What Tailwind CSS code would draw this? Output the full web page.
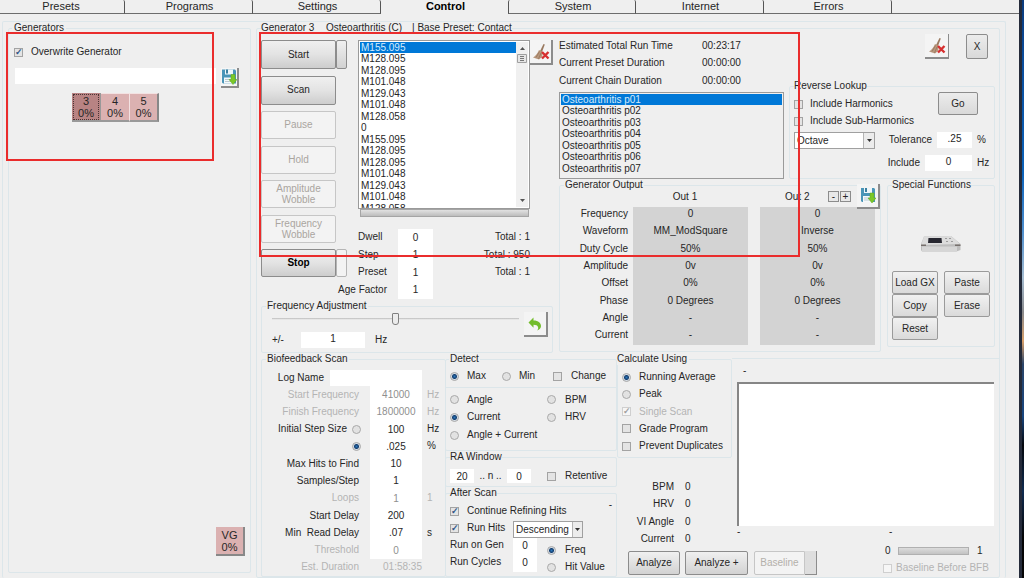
<!doctype html>
<html lang="en">

<head>
  <meta charset="UTF-8" />
  <meta name="viewport" content="width=device-width, initial-scale=1.0" />
  <title>Control</title>
  <script src="https://cdn.jsdelivr.net/npm/@tailwindcss/browser@4"></script>
</head>

<body class="h-screen overflow-hidden bg-[#efefef] font-['Liberation_Sans',Arial,sans-serif] text-[10px]/[12px] text-[#262626]">

  <!-- Shared icons -->
  <svg class="hidden">
    <symbol id="icon-save" viewBox="0 0 16 17">
      <path d="M1 1h13l1 1v13H2l-1-1z" fill="#4a95b8" />
      <path d="M4 1h8v5H4z" fill="#eef6fa" />
      <path d="M5 1h2v4H5z" fill="#3b7f9f" />
      <path d="M3 9h10v6H3z" fill="#f4f8fa" />
      <path d="M4 11h7M4 13h7" stroke="#b9c9d1" />
      <path d="M10 6h4v5h2l-4 5-4-5h2z" fill="#7bc728" stroke="#5fa81b" stroke-width=".5" />
    </symbol>
    <symbol id="icon-broom" viewBox="0 0 18 18">
      <path d="M11.500 1l1.300.6-3 8-2-1z" fill="#9a7a60" />
      <path d="M7 7l4 2.200L10 14l-3 2.500L1 14.500c2.500-1.500 4.500-4 6-7.500z" fill="#b8977c" />
      <path d="M7.500 8.500l-3.500 6M9 10l-2.500 6" stroke="#8f7059" stroke-width=".7" />
      <path d="M10 9l6.500 6.500M16.500 9L10 15.500" stroke="#d62f2f" stroke-width="2.400" />
    </symbol>
  </svg>

  <div class="flex h-full">
    <!-- Application window -->
    <div class="flex min-w-0 flex-1 flex-col [&_fieldset]:min-w-0 [&_fieldset]:border [&_fieldset]:rounded-[2px] [&_fieldset]:border-[#dce6ea] [&_[type=checkbox]]:relative [&_[type=checkbox]]:size-[9px] [&_[type=checkbox]]:shrink-0 [&_[type=checkbox]]:appearance-none [&_[type=checkbox]]:border [&_[type=checkbox]]:border-[#a3a3a3] [&_[type=checkbox]]:bg-[#e4e4e4] [&_[type=checkbox]]:after:absolute [&_[type=checkbox]]:after:left-0 [&_[type=checkbox]]:after:-top-px [&_[type=checkbox]]:after:text-[9px]/[9px] [&_[type=checkbox]]:after:font-bold [&_[type=checkbox]]:after:text-[#2f5688] [&_[type=checkbox]:checked]:after:content-['✓'] [&_[type=checkbox]:disabled]:border-[#cfcfcf] [&_[type=checkbox]:disabled]:bg-[#f6f6f6] [&_[type=checkbox]:disabled]:after:text-[#a0a0a0] [&_[type=radio]]:size-[9px] [&_[type=radio]]:shrink-0 [&_[type=radio]]:appearance-none [&_[type=radio]]:rounded-full [&_[type=radio]]:border [&_[type=radio]]:border-[#a9a9a9] [&_[type=radio]]:bg-[#e2e2e2] [&_[type=radio]:checked]:bg-[radial-gradient(circle,#2a78bd_0,#153f70_2px,#d5dde5_3px)]">

      <!-- Tabs -->
      <nav class="flex h-[14px] shrink-0 text-[11px]/[12px] [&_a]:border-b [&_a]:border-b-[#6d6d6d] [&_a]:text-center">
        <a href="#" class="w-[125px] rounded-tr-[2px] border-r border-r-[#555] pr-[2px]">Presets</a>
        <a href="#" class="w-[128px] rounded-tr-[2px] border-r border-r-[#555] pl-[2px]">Programs</a>
        <a href="#" class="w-[128px] rounded-tr-[2px] border-r border-r-[#555] pl-[2px]">Settings</a>
        <span class="w-[127px] pl-[2px] text-center font-bold text-black">Control</span>
        <a href="#" class="w-[128px] rounded-t-[2px] border-x border-x-[#555] pl-[2px]">System</a>
        <a href="#" class="w-[128px] rounded-tr-[2px] border-r border-r-[#555] pl-[2px]">Internet</a>
        <a href="#" class="w-[128px] rounded-tr-[2px] border-r border-r-[#555] pl-[2px]">Errors</a>
        <span class="flex-1 border-b border-[#6d6d6d]"></span>
      </nav>

      <main class="mt-[7px] mr-[13px] ml-[2px] flex min-h-0 flex-1 gap-[5px] rounded-[2px] border border-b-0 border-[#dce6ea] px-[5px]">

        <!-- Generators -->
        <fieldset class="mb-[5px] flex w-[243px] shrink-0 flex-col">
          <legend class="ml-[3px] px-[2px]">Generators</legend>
          <label class="mt-[12px] ml-[5px] flex items-center gap-[8px]"><input type="checkbox" checked>Overwrite Generator</label>
          <div class="mt-[10px] ml-[6px] flex items-start gap-[5px]">
            <input type="text" aria-label="Generator name" class="h-[16px] w-[201px] bg-white px-1">
            <button aria-label="Save generator" class="border-r-2 border-b-2 border-[#8c8c8c] bg-[#f6f6f6]"><svg class="h-[18px] w-[16px]"><use href="#icon-save" /></svg></button>
          </div>
          <div class="mt-[5px] ml-[63px] flex text-[11px]/[12px]">
            <button class="h-[29px] w-[29px] border-r border-b-2 border-[#999] bg-[#b88383] p-px"><span class="block border border-dotted border-[#4b3535]">3<br>0%</span></button>
            <button class="h-[29px] w-[29px] border-t border-r border-b-2 border-t-[#f3e2e2] border-r-[#f3e2e2] border-b-[#999] bg-[#dbb1b1]">4<br>0%</button>
            <button class="h-[29px] w-[29px] border-t border-r-2 border-b-2 border-t-[#f3e2e2] border-r-[#888] border-b-[#999] bg-[#dbb1b1]">5<br>0%</button>
          </div>
          <button class="mt-auto mr-[5px] mb-[16px] ml-auto h-[29px] w-[29px] border-r-2 border-b-2 border-[#888] bg-[#dbb1b1] text-[11px]/[12px]">VG<br>0%</button>
        </fieldset>

        <!-- Generator 3 -->
        <fieldset class="flex min-w-0 flex-1 flex-col pl-[4px]">
          <legend class="whitespace-pre"><span class="inline-block w-[65px]">Generator 3</span><span class="inline-block w-[86px]">Osteoarthritis (C)</span>| Base Preset: Contact</legend>

          <div class="flex gap-[6px]">
            <div class="w-[292px] shrink-0 pt-[6px]">
              <div class="flex">
                <!-- Run buttons -->
                <div class="flex h-[237px] w-[86px] shrink-0 flex-col justify-between">
                  <div class="flex h-[29px]">
                    <button class="w-[75px] rounded-[2px] border border-[#8c8c8c] bg-linear-to-b from-[#f0f0f0] via-[#e3e3e3] to-[#cdcdcd]">Start</button>
                    <button aria-label="Start options" class="w-[11px] rounded-[2px] border border-[#8c8c8c] bg-linear-to-b from-[#f0f0f0] to-[#d2d2d2]"></button>
                  </div>
                  <button class="h-[29px] w-[75px] rounded-[2px] border border-[#8c8c8c] bg-linear-to-b from-[#f0f0f0] via-[#e3e3e3] to-[#cdcdcd]">Scan</button>
                  <button disabled class="h-[28px] w-[75px] rounded-[2px] border border-[#c6c6c6] bg-[#f3f3f3] text-[#aaa59f]">Pause</button>
                  <button disabled class="h-[28px] w-[75px] rounded-[2px] border border-[#c6c6c6] bg-[#f3f3f3] text-[#aaa59f]">Hold</button>
                  <button disabled class="h-[28px] w-[75px] rounded-[2px] border border-[#c6c6c6] bg-[#f3f3f3] text-[10px]/[11px] text-[#aaa59f]">Amplitude<br>Wobble</button>
                  <button disabled class="h-[28px] w-[75px] rounded-[2px] border border-[#c6c6c6] bg-[#f3f3f3] text-[10px]/[11px] text-[#aaa59f]">Frequency<br>Wobble</button>
                  <div class="flex h-[28px]">
                    <button class="w-[75px] rounded-[2px] border border-[#8c8c8c] bg-linear-to-b from-[#f0f0f0] via-[#e3e3e3] to-[#cdcdcd] font-bold text-black">Stop</button>
                    <button aria-label="Stop options" class="w-[11px] rounded-[2px] border border-[#b5b5b5] bg-[#f3f3f3]"></button>
                  </div>
                </div>

                <!-- Frequency list -->
                <div class="ml-[11px] min-w-0 flex-1">
                  <div class="flex items-start">
                    <div class="flex h-[169px] w-[173px] overflow-hidden border border-[#9a9a9a] bg-white p-px">
                      <ul role="listbox" aria-label="Frequencies" class="grid h-[172px] flex-1 auto-rows-fr [&_li]:pl-px">
                        <li role="option" aria-selected="true" class="bg-[#0078d7] text-[#d5ebfb]">M155.095</li>
                        <li role="option">M128.095</li>
                        <li role="option">M128.095</li>
                        <li role="option">M101.048</li>
                        <li role="option">M129.043</li>
                        <li role="option">M101.048</li>
                        <li role="option">M128.058</li>
                        <li role="option">0</li>
                        <li role="option">M155.095</li>
                        <li role="option">M128.095</li>
                        <li role="option">M128.095</li>
                        <li role="option">M101.048</li>
                        <li role="option">M129.043</li>
                        <li role="option">M101.048</li>
                        <li role="option">M128.058</li>
                      </ul>
                      <div class="flex w-[12px] flex-col items-center bg-[#f0f0f0]">
                        <svg class="mt-[5px] h-[4px] w-[5px]" viewBox="0 0 5 4"><path d="M2.500 0L5 3H0z" fill="#555" /></svg>
                        <svg class="mt-[3px] h-[9px] w-[10px]" viewBox="0 0 10 9"><path d="M.5.5h9v8h-9z" fill="#e6e6e6" stroke="#a0a0a0" /><path d="M3 2.500h4M3 4.500h4M3 6.500h4" stroke="#777" /></svg>
                        <svg class="mt-auto mb-[4px] h-[4px] w-[5px]" viewBox="0 0 5 4"><path d="M0 0h5L2.500 3z" fill="#555" /></svg>
                      </div>
                    </div>
                    <button aria-label="Clear frequencies" class="h-[25px] w-[23px] border-r-2 border-b-2 border-[#8c8c8c] bg-[#f4f4f4]"><svg class="mx-auto size-[18px]"><use href="#icon-broom" /></svg></button>
                  </div>
                  <div class="mx-[2px] h-[8px] w-[169px] border border-[#a5a5a5] bg-linear-to-b from-[#e2e2e2] to-[#bdbdbd]"></div>

                  <div class="mt-[12px] mb-px grid h-[70px] w-[172px] auto-rows-fr grid-cols-[29px_35px_1fr] items-center gap-x-[11px] [&_input]:h-full [&_input]:w-full [&_input]:bg-white [&_input]:pb-px [&_input]:text-center [&_label]:pb-px [&_output]:pb-px [&_output]:text-right">
                    <label for="dwell">Dwell</label><input id="dwell" value="0"><output>Total : 1</output>
                    <label for="step">Step</label><input id="step" value="1"><output>Total : 950</output>
                    <label for="preset">Preset</label><input id="preset" value="1"><output>Total : 1</output>
                    <label for="age" class="justify-self-end whitespace-nowrap">Age Factor</label><input id="age" value="1">
                  </div>
                </div>
              </div>

              <!-- Frequency adjustment -->
              <fieldset class="flex justify-between pr-[4px] pb-[4px] pl-[10px]">
                <legend class="-ml-[6px] px-[1px]">Frequency Adjustment</legend>
                <div>
                  <input type="range" aria-label="Frequency adjustment" class="block h-[13px] w-[247px] appearance-none bg-linear-to-b from-transparent from-45% via-[#b5b5b5] via-45% to-transparent to-60% [&::-webkit-slider-thumb]:h-[12px] [&::-webkit-slider-thumb]:w-[7px] [&::-webkit-slider-thumb]:appearance-none [&::-webkit-slider-thumb]:rounded-t-[1px] [&::-webkit-slider-thumb]:rounded-b-[3px] [&::-webkit-slider-thumb]:border [&::-webkit-slider-thumb]:border-[#808080] [&::-webkit-slider-thumb]:bg-[#ececec]">
                  <div class="mt-[7px] flex items-center">
                    <label for="adjust" class="w-[29px]">+/-</label>
                    <input id="adjust" value="1" class="h-[16px] w-[64px] bg-white pb-[3px] text-center">
                    <span class="ml-[10px]">Hz</span>
                  </div>
                </div>
                <button aria-label="Reset adjustment" class="h-[25px] w-[24px] border-r-2 border-b-2 border-[#8c8c8c] bg-[#f4f4f4]"><svg class="mx-auto size-[14px]" viewBox="0 0 14 14"><path d="M5.500.5v3C10.500 3.500 13 6 13 9c0 2-1.500 4-4 4.500 1-1 1.500-2 1-3.500-.5-1.300-2-2.200-4.500-2.200v3L.5 5.500z" fill="#73bd2b" /></svg></button>
              </fieldset>
            </div>

            <div class="mr-[4px] min-w-0 flex-1">
              <div class="flex gap-[5px]">
                <div class="w-[225px] shrink-0 pt-[3px]">
                  <dl class="grid h-[53px] auto-rows-fr grid-cols-[143px_1fr] items-center">
                    <dt>Estimated Total Run Time</dt><dd>00:23:17</dd>
                    <dt>Current Preset Duration</dt><dd>00:00:00</dd>
                    <dt>Current Chain Duration</dt><dd>00:00:00</dd>
                  </dl>
                  <div class="mt-[2px] h-[87px] border border-[#9a9a9a] p-px">
                    <ul role="listbox" aria-label="Programs" class="grid h-[80px] auto-rows-fr [&_li]:pl-[1px]">
                      <li role="option" aria-selected="true" class="bg-[#0078d7] text-[#d5ebfb]">Osteoarthritis p01</li>
                      <li role="option">Osteoarthritis p02</li>
                      <li role="option">Osteoarthritis p03</li>
                      <li role="option">Osteoarthritis p04</li>
                      <li role="option">Osteoarthritis p05</li>
                      <li role="option">Osteoarthritis p06</li>
                      <li role="option">Osteoarthritis p07</li>
                    </ul>
                  </div>
                </div>

                <div class="min-w-0 flex-1">
                  <div class="flex justify-end gap-[17px] pr-[7px]">
                    <button aria-label="Clear all" class="h-[25px] w-[24px] border-r border-b-2 border-[#8c8c8c] bg-[#f4f4f4]"><svg class="mx-auto size-[18px]"><use href="#icon-broom" /></svg></button>
                    <button class="h-[25px] w-[22px] rounded-[2px] border border-[#8c8c8c] bg-linear-to-b from-[#ececec] to-[#d9d9d9]">X</button>
                  </div>
                  <!-- Reverse lookup -->
                  <fieldset class="mt-[21px] pr-[3px] pb-[7px] pl-[4px]">
                    <legend>Reverse Lookup</legend>
                    <div class="flex h-[40px] justify-between pr-[13px]">
                      <div class="flex flex-col gap-[5px] pt-[6px]">
                        <label class="flex items-center gap-[7px]"><input type="checkbox">Include Harmonics</label>
                        <label class="flex items-center gap-[7px]"><input type="checkbox">Include Sub-Harmonics</label>
                      </div>
                      <button class="h-[23px] w-[40px] rounded-[2px] border border-[#8c8c8c] bg-linear-to-b from-[#ececec] to-[#d9d9d9]">Go</button>
                    </div>
                    <div class="flex items-start justify-between">
                      <div class="relative">
                        <select aria-label="Range" class="h-[17px] w-[81px] appearance-none border border-[#a0a0a0] bg-white pl-[2px]"><option>Octave</option></select>
                        <span class="pointer-events-none absolute top-px right-px flex h-[15px] w-[11px] items-center justify-center border-l border-[#b5b5b5] bg-[#ececec]"><svg class="h-[3px] w-[5px]" viewBox="0 0 5 3"><path d="M0 0h5L2.500 3z" fill="#333" /></svg></span>
                      </div>
                      <div>
                        <div class="flex items-center justify-end"><label for="tolerance">Tolerance</label><input id="tolerance" value=".25" class="ml-[5px] h-[16px] w-[35px] bg-white pb-[3px] text-center"><span class="w-[19px] pl-[5px]">%</span></div>
                        <div class="mt-[7px] flex items-center justify-end"><label for="include">Include</label><input id="include" value="0" class="ml-[5px] h-[16px] w-[47px] bg-white pb-[3px] text-center"><span class="w-[19px] pl-[5px]">Hz</span></div>
                      </div>
                    </div>
                  </fieldset>
                </div>
              </div>

              <div class="flex items-start gap-[6px]">
                <!-- Generator output -->
                <fieldset class="relative w-[322px] shrink-0 pb-[6px]">
                  <legend class="ml-[4px] px-[1px]">Generator Output</legend>
                  <table class="w-full [&_tbody_th]:pr-[5px] [&_tbody_th]:pb-[3px] [&_tbody_th]:text-right [&_th]:font-normal [&_tbody_td]:pb-[3px] [&_tbody_td]:text-center [&_tbody_tr]:h-[17px] [&_tbody_tr:nth-child(3n)]:h-[18px]">
                    <thead>
                      <tr class="h-[16px] align-top">
                        <th class="w-[73px]"></th>
                        <th class="w-[115px] pr-[11px]">Out 1</th>
                        <th class="w-[12px]"></th>
                        <th class="w-[115px] pl-[25px] text-left">Out 2</th>
                        <th></th>
                      </tr>
                    </thead>
                    <tbody>
                      <tr><th>Frequency</th><td class="bg-[#d3d3d3]">0</td><td></td><td class="bg-[#d3d3d3]">0</td><td></td></tr>
                      <tr><th>Waveform</th><td class="bg-[#d3d3d3]">MM_ModSquare</td><td></td><td class="bg-[#d3d3d3]">Inverse</td><td></td></tr>
                      <tr><th>Duty Cycle</th><td class="bg-[#d3d3d3]">50%</td><td></td><td class="bg-[#d3d3d3]">50%</td><td></td></tr>
                      <tr><th>Amplitude</th><td class="bg-[#d3d3d3]">0v</td><td></td><td class="bg-[#d3d3d3]">0v</td><td></td></tr>
                      <tr><th>Offset</th><td class="bg-[#d3d3d3]">0%</td><td></td><td class="bg-[#d3d3d3]">0%</td><td></td></tr>
                      <tr><th>Phase</th><td class="bg-[#d3d3d3]">0 Degrees</td><td></td><td class="bg-[#d3d3d3]">0 Degrees</td><td></td></tr>
                      <tr><th>Angle</th><td class="bg-[#d3d3d3]">-</td><td></td><td class="bg-[#d3d3d3]">-</td><td></td></tr>
                      <tr><th>Current</th><td class="bg-[#d3d3d3]">-</td><td></td><td class="bg-[#d3d3d3]">-</td><td></td></tr>
                    </tbody>
                  </table>
                  <div class="absolute -top-[7px] right-0 flex items-start">
                    <button aria-label="Decrease outputs" class="mt-[7px] mr-px flex h-[11px] w-[11px] items-center justify-center border border-[#8c8c8c] bg-[#e8e8e8]">-</button>
                    <button aria-label="Increase outputs" class="mt-[7px] mr-[6px] flex h-[11px] w-[11px] items-center justify-center border border-[#8c8c8c] bg-[#e8e8e8]">+</button>
                    <button aria-label="Save output" class="flex h-[25px] w-[23px] items-center justify-center border-r-2 border-b-2 border-[#8c8c8c] bg-[#f4f4f4]"><svg class="h-[17px] w-[16px]"><use href="#icon-save" /></svg></button>
                  </div>
                </fieldset>

                <!-- Special functions -->
                <fieldset class="min-w-0 flex-1 px-[4px] pb-[6px]">
                  <legend>Special Functions</legend>
                  <svg class="mx-auto mt-[44px] h-[18px] w-[42px]" viewBox="0 0 42 18">
                    <path d="M4 1.500L31 1l9.500 8v6l-4 1.500H2L1 15V9z" fill="#bdbdbd" />
                    <path d="M4 1.500L31 1l9 8-39 1z" fill="#dcdcdc" />
                    <path d="M8.500 3h13l.5 5H8z" fill="#272730" />
                    <path d="M25 3h2v1h-2zM29 3h2v1h-2zM26 6h2v1h-2zM31 6h2v1h-2z" fill="#9b9b9b" />
                    <path d="M1 9.500h5v1.500H1zM35 9.500h5.500V11H35z" fill="#77706d" />
                    <path d="M2 11.500h35v4.500H2z" fill="#d6d6d6" />
                  </svg>
                  <div class="mt-[18px] grid grid-cols-2 gap-x-[6px] [&_button]:h-[23px] [&_button]:rounded-[2px] [&_button]:border [&_button]:border-[#9a9a9a] [&_button]:bg-linear-to-b [&_button]:from-[#f1f1f1] [&_button]:to-[#dadada] [&_button]:whitespace-nowrap">
                    <button>Load GX</button>
                    <button>Paste</button>
                    <button>Copy</button>
                    <button>Erase</button>
                    <button>Reset</button>
                  </div>
                </fieldset>
              </div>
            </div>
          </div>

          <div class="flex min-h-0 flex-1">
            <!-- Biofeedback scan -->
            <fieldset class="w-[185px] shrink-0">
              <legend class="ml-[4px] px-[1px]">Biofeedback Scan</legend>
              <div class="flex items-center pt-[5px]">
                <label for="log" class="w-[68px] pr-[6px] text-right">Log Name</label>
                <input id="log" class="h-[16px] w-[92px] bg-white px-1">
              </div>
              <div class="grid h-[190px] auto-rows-fr grid-cols-[108px_52px_1fr] items-center [&_input:not([type])]:h-full [&_input:not([type])]:w-full [&_input:not([type])]:bg-white [&_input:not([type])]:text-center [&_label]:pr-[11px] [&_label]:text-right [&_span]:pl-[5px] [&_:disabled]:text-[#8f8f8f]">
                <label for="f1" class="text-[#b4b4b4]">Start Frequency</label><input id="f1" value="41000" disabled><span class="text-[#b4b4b4]">Hz</span>
                <label for="f2" class="text-[#b4b4b4]">Finish Frequency</label><input id="f2" value="1800000" disabled><span class="text-[#b4b4b4]">Hz</span>
                <div class="flex items-center justify-end pr-[9px]"><label for="f3" class="-mr-[6px]">Initial Step Size</label><input type="radio" name="stepsize" aria-label="Step in hertz"></div><input id="f3" value="100"><span>Hz</span>
                <div class="flex items-center justify-end pr-[9px]"><input type="radio" name="stepsize" aria-label="Step in percent" checked></div><input aria-label="Step percent" value=".025"><span>%</span>
                <label for="f5">Max Hits to Find</label><input id="f5" value="10"><span></span>
                <label for="f6">Samples/Step</label><input id="f6" value="1"><span></span>
                <label for="f7" class="text-[#b4b4b4]">Loops</label><input id="f7" value="1" disabled><span class="text-[#b4b4b4]">1</span>
                <label for="f8">Start Delay</label><input id="f8" value="200"><span></span>
                <label for="f9" class="whitespace-pre">Min  Read Delay</label><input id="f9" value=".07"><span>s</span>
                <label for="f10" class="text-[#b4b4b4]">Threshold</label><input id="f10" value="0" disabled><span></span>
                <label for="f11" class="text-[#b4b4b4]">Est. Duration</label><output id="f11" class="text-right text-[#b4b4b4]">01:58:35</output>
              </div>
            </fieldset>

            <div class="-ml-px flex w-[172px] shrink-0 flex-col">
              <!-- Detect -->
              <fieldset class="border-b-0">
                <legend class="ml-[3px] px-[1px]">Detect</legend>
                <div class="flex h-[23px] items-center border-b border-[#dce6ea] pl-[4px]">
                  <label class="flex w-[52px] items-center gap-[8px]"><input type="radio" name="peak" checked>Max</label>
                  <label class="flex w-[51px] items-center gap-[8px]"><input type="radio" name="peak">Min</label>
                  <label class="flex items-center gap-[9px]"><input type="checkbox">Change</label>
                </div>
                <div class="grid h-[62px] grid-cols-[97px_1fr] grid-rows-3 items-center pt-[3px] pb-[6px] pl-[4px]">
                  <label class="flex items-center gap-[8px]"><input type="radio" name="detect">Angle</label>
                  <label class="flex items-center gap-[9px]"><input type="radio" name="detect">BPM</label>
                  <label class="flex items-center gap-[8px]"><input type="radio" name="detect" checked>Current</label>
                  <label class="flex items-center gap-[9px]"><input type="radio" name="detect">HRV</label>
                  <label class="flex items-center gap-[8px] whitespace-nowrap"><input type="radio" name="detect">Angle + Current</label>
                </div>
              </fieldset>
              <!-- RA window -->
              <fieldset class="flex items-center pt-[6px] pb-[3px] pl-[4px]">
                <legend class="px-0">RA Window</legend>
                <input aria-label="Window start" value="20" class="h-[14px] w-[24px] bg-white text-center">
                <span class="w-[33px] text-center">.. n ..</span>
                <input aria-label="Window end" value="0" class="h-[14px] w-[24px] bg-white text-center">
                <label class="ml-[16px] flex items-center gap-[9px]"><input type="checkbox">Retentive</label>
              </fieldset>
              <!-- After scan -->
              <fieldset class="flex-1 pr-[4px] pl-[4px]">
                <legend>After Scan</legend>
                <div class="flex items-start justify-between">
                  <label class="flex items-center gap-[8px] pt-[6px]"><input type="checkbox" checked>Continue Refining Hits</label>
                  <span>-</span>
                </div>
                <div class="mt-[4px] flex items-start">
                  <label class="flex w-[63px] items-center gap-[8px] pt-px"><input type="checkbox" checked>Run Hits</label>
                  <div class="relative">
                    <select aria-label="Hit order" class="block h-[17px] w-[70px] appearance-none border border-[#a0a0a0] bg-white pl-[2px]"><option>Descending</option></select>
                    <span class="pointer-events-none absolute top-px right-px flex h-[15px] w-[10px] items-center justify-center border-l border-[#b5b5b5] bg-[#ececec]"><svg class="h-[3px] w-[5px]" viewBox="0 0 5 3"><path d="M0 0h5L2.500 3z" fill="#333" /></svg></span>
                  </div>
                </div>
                <div class="flex">
                  <div class="grid h-[34px] grid-cols-[63px_24px] grid-rows-2 items-center [&_input]:h-full [&_input]:w-full [&_input]:bg-white [&_input]:pb-[3px] [&_input]:text-center [&_label]:pb-[3px]">
                    <label for="rungen">Run on Gen</label><input id="rungen" value="0">
                    <label for="cycles">Run Cycles</label><input id="cycles" value="0">
                  </div>
                  <div class="ml-[10px] flex flex-col gap-[5px] pt-[6px]">
                    <label class="flex items-center gap-[9px]"><input type="radio" name="sort" checked>Freq</label>
                    <label class="flex items-center gap-[9px]"><input type="radio" name="sort">Hit Value</label>
                  </div>
                </div>
              </fieldset>
            </div>

            <div class="flex min-w-0 flex-1 flex-col">
              <div class="flex">
                <div class="w-[115px] shrink-0">
                  <!-- Calculate using -->
                  <fieldset class="border-l-0">
                    <legend class="-ml-px pr-[2px]">Calculate Using</legend>
                    <div class="flex h-[92px] flex-col justify-between pt-[6px] pb-[5px] pl-[4px] [&_label]:flex [&_label]:items-center [&_label]:gap-[8px]">
                      <label><input type="radio" name="calc" checked>Running Average</label>
                      <label><input type="radio" name="calc">Peak</label>
                      <label class="text-[#b4b4b4]"><input type="checkbox" checked disabled>Single Scan</label>
                      <label><input type="checkbox">Grade Program</label>
                      <label><input type="checkbox">Prevent Duplicates</label>
                    </div>
                  </fieldset>
                  <dl class="mt-[20px] grid h-[70px] auto-rows-fr grid-cols-[57px_1fr] items-center gap-x-[11px] [&_dt]:text-right">
                    <dt>BPM</dt><dd>0</dd>
                    <dt>HRV</dt><dd>0</dd>
                    <dt>VI Angle</dt><dd>0</dd>
                    <dt>Current</dt><dd>0</dd>
                  </dl>
                </div>
                <!-- Scan plot -->
                <div class="mt-[5px] min-w-0 flex-1 border-t border-[#dce6ea] pr-[5px] pl-[5px]">
                  <p class="pt-[6px] pl-[6px]">-</p>
                  <div class="mt-[5px] h-[144px] border-t-2 border-l-2 border-[#868686] bg-white"></div>
                  <div class="grid grid-cols-[152px_1fr]"><span>-</span><span>-</span></div>
                </div>
              </div>
              <div class="flex items-start justify-between pl-[11px]">
                <div class="mt-[3px] flex h-[24px] gap-[5px]">
                  <button class="w-[52px] rounded-[2px] border border-[#8c8c8c] bg-linear-to-b from-[#f0f0f0] to-[#d2d2d2]">Analyze</button>
                  <button class="w-[63px] rounded-[2px] border border-[#8c8c8c] bg-linear-to-b from-[#f0f0f0] to-[#d2d2d2]">Analyze +</button>
                  <div class="ml-[1px] flex">
                    <button disabled class="w-[51px] rounded-l-[2px] border border-[#c6c6c6] bg-[#f3f3f3] text-[#b4b0aa]">Baseline</button>
                    <button aria-label="Baseline options" class="w-[12px] border-r border-b border-[#8c8c8c] bg-[#dedede]"></button>
                  </div>
                </div>
                <div class="-mt-[2px] w-[116px]">
                  <div class="flex h-[9px] items-center"><span class="w-[15px] pl-[2px]">0</span><div class="h-[8px] w-[71px] border border-[#b0b0b0] bg-linear-to-b from-[#dcdcdc] to-[#c3c3c3]"></div><span class="ml-[8px]">1</span></div>
                  <label class="mt-[7px] flex items-center gap-[4px] whitespace-nowrap text-[#b4b4b4]"><input type="checkbox" disabled>Baseline Before BFB</label>
                </div>
              </div>
            </div>
          </div>
        </fieldset>
      </main>
    </div>

    <!-- Window edge and desktop behind it -->
    <div class="w-[3px] bg-[#252b3a]"></div>
    <div class="w-[2px] bg-[linear-gradient(#0b3a7c,#0a4c9c_10%,#0b62ba_30%,#4f8fce_40%,#a5bdd2_48%,#8a8a8c_54%,#d9a06a_59%,#2a4468_63%,#17457f_72%,#05070c_77%,#0f2b50_85%,#050505_93%)]"></div>
  </div>

  <!-- Highlight frames -->
  <div class="pointer-events-none absolute top-[32px] left-[6px] h-[129px] w-[208px] border-2 border-[#ea2c2c]"></div>
  <div class="pointer-events-none absolute top-[32px] left-[259px] h-[225px] w-[541px] border-2 border-[#ea2c2c]"></div>

</body>

</html>
